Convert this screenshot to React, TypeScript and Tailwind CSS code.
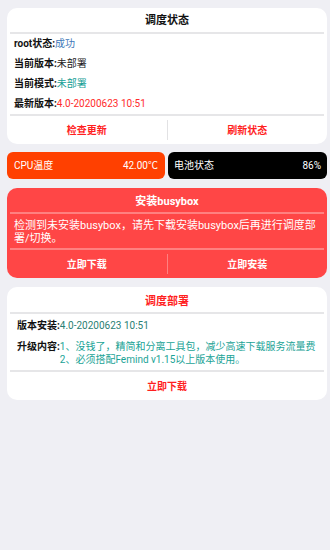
import React from 'react';

const font = { fontFamily: 'Roboto, "Noto Sans CJK SC", sans-serif' };

const Divider = ({ className = 'bg-[#e6e6e8]' }: { className?: string }) => (
  <div className={`mx-[3px] h-[2px] ${className}`} />
);

const StatusRow = ({ label, value, color }: { label: string; value: string; color: string }) => (
  <div className="flex h-5 items-center pl-[7px] text-[10px] leading-none">
    <span className="font-bold text-[#111]">{label}:</span>
    <span className={color}>{value}</span>
  </div>
);

const ButtonRow = ({ left, right, text, line }: { left: string; right: string; text: string; line: string }) => (
  <div className="flex h-[28px] items-center">
    <div className={`flex-1 text-center text-[10px] font-bold ${text}`}>{left}</div>
    <div className={`h-5 w-px ${line}`} />
    <div className={`flex-1 text-center text-[10px] font-bold ${text}`}>{right}</div>
  </div>
);

export default function App() {
  return (
    <div className="min-h-screen bg-[#efeff4] pb-4 pl-[7px] pr-[3px] pt-[8px]" style={font}>
      {/* 调度状态 */}
      <div className="rounded-[10px] bg-white">
        <div className="flex h-[24px] items-center justify-center pt-[3px] text-[11px] font-bold text-[#111]">调度状态</div>
        <Divider />
        <StatusRow label="root状态" value="成功" color="text-[#3f78b8]" />
        <StatusRow label="当前版本" value="未部署" color="text-[#222]" />
        <StatusRow label="当前模式" value="未部署" color="text-[#16a096]" />
        <StatusRow label="最新版本" value="4.0-20200623 10:51" color="text-[#ff2b2b]" />
        <Divider />
        <ButtonRow left="检查更新" right="刷新状态" text="text-[#ff1f1f]" line="bg-[#e2e2e4]" />
      </div>

      {/* CPU / 电池 */}
      <div className="mt-[8px] flex gap-[3px]">
        <div className="flex h-[27px] w-[158px] items-center justify-between rounded-[6px] bg-[#ff4000] px-[7px] text-[10px] text-white">
          <span>CPU温度</span>
          <span>42.00℃</span>
        </div>
        <div className="flex h-[27px] flex-1 items-center justify-between rounded-[6px] bg-black px-[6px] text-[10px] text-white">
          <span>电池状态</span>
          <span>86%</span>
        </div>
      </div>

      {/* 安装busybox */}
      <div className="mt-[9px] rounded-[10px] bg-[#ff4646] text-white">
        <div className="flex h-[24px] items-center justify-center pt-[4px] text-[11px] font-bold">安装busybox</div>
        <Divider className="bg-[#ff8080]" />
        <div className="pb-[3px] pl-[7px] pr-[4px] pt-[5px] text-[11px] leading-[13px]">
          检测到未安装busybox，请先下载安装busybox后再进行调度部署/切换。
        </div>
        <Divider className="bg-[#ff8080]" />
        <ButtonRow left="立即下载" right="立即安装" text="text-white" line="bg-[#ff8080]" />
      </div>

      {/* 调度部署 */}
      <div className="mt-[9px] rounded-[10px] bg-white">
        <div className="flex h-[25px] items-center justify-center pt-[5px] text-[11px] font-bold text-[#ff1f1f]">调度部署</div>
        <Divider />
        <div className="pb-[4px] pl-[10px] pt-[2px] text-[10px]">
          <div className="flex h-5 items-center leading-none">
            <span className="font-bold text-[#111]">版本安装:</span>
            <span className="text-[#2a7f74]">4.0-20200623 10:51</span>
          </div>
          <div className="mt-[4px] flex leading-[13px]">
            <span className="font-bold text-[#111]">升级内容:</span>
            <div className="text-[#1aa396]">
              <div>1、没钱了，精简和分离工具包，减少高速下载服务流量费</div>
              <div>2、必须搭配Femind v1.15以上版本使用。</div>
            </div>
          </div>
        </div>
        <Divider />
        <div className="flex h-[28px] items-center justify-center text-[10px] font-bold text-[#ff1f1f]">立即下载</div>
      </div>
    </div>
  );
}
